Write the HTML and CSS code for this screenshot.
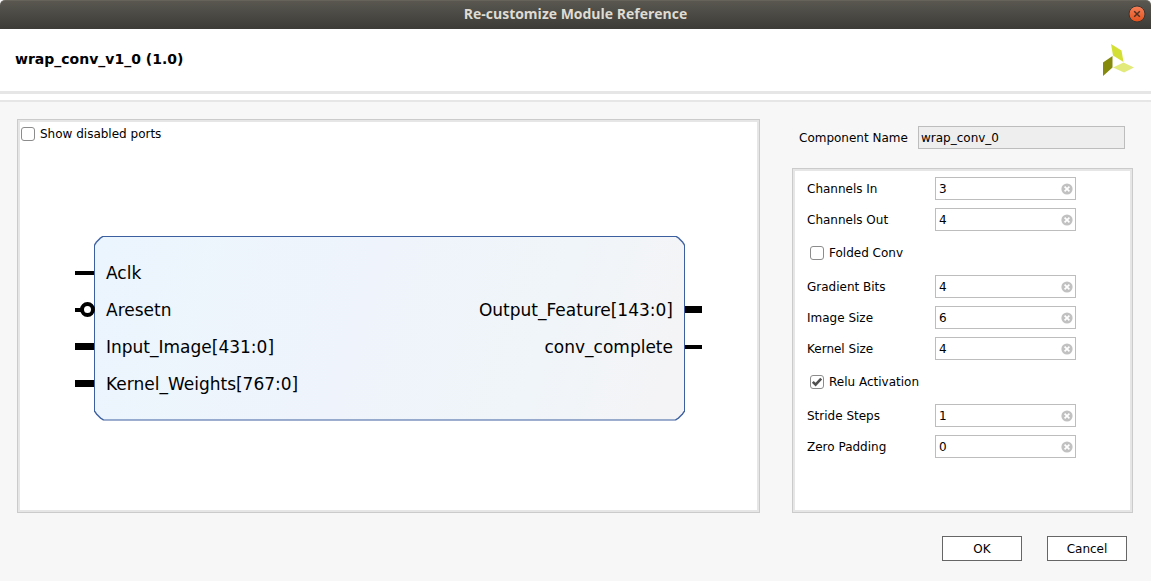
FILE: index.html
```
<!DOCTYPE html>
<html lang="en">
<head>
<meta charset="utf-8">
<title>Re-customize Module Reference</title>
<link rel="stylesheet" href="styles.css">
</head>
<body>
<svg class="defs" width="0" height="0" aria-hidden="true">
  <symbol id="clear" viewBox="0 0 12 12">
    <circle cx="6" cy="6" r="5.6" fill="#c1c1c1"/>
    <path d="M3.6 3.6 8.4 8.4M8.4 3.6 3.6 8.4" stroke="#fff" stroke-width="1.7"/>
  </symbol>
</svg>
<div class="titlebar">
  <h1 class="titlebar-text">Re-customize Module Reference</h1>
  <button class="close" type="button" aria-label="Close">
    <svg width="18" height="18" viewBox="0 0 18 18">
      <defs><linearGradient id="orange" x1="0" y1="0" x2="0" y2="1"><stop offset="0" stop-color="#f58059"/><stop offset="1" stop-color="#e2511c"/></linearGradient></defs>
      <circle cx="9" cy="9" r="8" fill="url(#orange)" stroke="#373632" stroke-width="1"/>
      <path d="M6.2 6.2 11.8 11.8M11.8 6.2 6.2 11.8" stroke="#4c3022" stroke-width="1.5"/>
    </svg>
  </button>
</div>
<header class="header">
  <h2 class="module">wrap_conv_v1_0 (1.0)</h2>
  <svg class="logo" width="32" height="32" viewBox="0 0 32 32" aria-hidden="true">
    <path d="M8 0 18.500 6.500 20.500 18 10 11.500Z" fill="#d4df35"/>
    <path d="M0 18.500 9.500 12V23.500L0 32Z" fill="#858a0c"/>
    <path d="M10 23.500 20.500 18.500 31 23.500 21 28.500Z" fill="#e2ea7c"/>
  </svg>
</header>
<form class="dialog">
  <main class="content">
    <section class="panel preview">
      <label class="check"><input type="checkbox">Show disabled ports</label>
      <div class="diagram">
        <ul class="pins pins-in" aria-hidden="true">
          <li class="pin"></li>
          <li class="pin inverted"></li>
          <li class="pin bus"></li>
          <li class="pin bus"></li>
        </ul>
        <div class="block">
          <ul class="ports">
            <li>Aclk</li>
            <li>Aresetn</li>
            <li>Input_Image[431:0]</li>
            <li>Kernel_Weights[767:0]</li>
          </ul>
          <ul class="ports ports-out">
            <li>Output_Feature[143:0]</li>
            <li>conv_complete</li>
          </ul>
        </div>
        <ul class="pins pins-out" aria-hidden="true">
          <li class="pin bus"></li>
          <li class="pin"></li>
        </ul>
      </div>
    </section>
    <section class="settings">
      <div class="name-row">
        <label for="component">Component Name</label>
        <input class="name" id="component" type="text" value="wrap_conv_0" readonly>
      </div>
      <div class="panel params">
        <div class="row"><label for="cin">Channels In</label><div class="field"><input id="cin" type="text" value="3"><button type="button" class="clear" aria-label="Clear"><svg width="12" height="12"><use href="#clear"/></svg></button></div></div>
        <div class="row"><label for="cout">Channels Out</label><div class="field"><input id="cout" type="text" value="4"><button type="button" class="clear" aria-label="Clear"><svg width="12" height="12"><use href="#clear"/></svg></button></div></div>
        <label class="check option"><input type="checkbox">Folded Conv</label>
        <div class="row"><label for="grad">Gradient Bits</label><div class="field"><input id="grad" type="text" value="4"><button type="button" class="clear" aria-label="Clear"><svg width="12" height="12"><use href="#clear"/></svg></button></div></div>
        <div class="row"><label for="img">Image Size</label><div class="field"><input id="img" type="text" value="6"><button type="button" class="clear" aria-label="Clear"><svg width="12" height="12"><use href="#clear"/></svg></button></div></div>
        <div class="row"><label for="kern">Kernel Size</label><div class="field"><input id="kern" type="text" value="4"><button type="button" class="clear" aria-label="Clear"><svg width="12" height="12"><use href="#clear"/></svg></button></div></div>
        <label class="check option"><input type="checkbox" checked>Relu Activation</label>
        <div class="row"><label for="stride">Stride Steps</label><div class="field"><input id="stride" type="text" value="1"><button type="button" class="clear" aria-label="Clear"><svg width="12" height="12"><use href="#clear"/></svg></button></div></div>
        <div class="row"><label for="pad">Zero Padding</label><div class="field"><input id="pad" type="text" value="0"><button type="button" class="clear" aria-label="Clear"><svg width="12" height="12"><use href="#clear"/></svg></button></div></div>
      </div>
    </section>
  </main>
  <footer class="actions">
    <button class="action" type="submit">OK</button>
    <button class="action" type="button">Cancel</button>
  </footer>
</form>
</body>
</html>
```
FILE: styles.css
```
*, *::before, *::after {
  box-sizing: border-box;
}

body {
  margin: 0;
  min-height: 100vh;
  display: flex;
  flex-direction: column;
  background: #f7f7f7;
  color: #000;
  font: 12px/16px "DejaVu Sans", sans-serif;
}

h1, h2, ul {
  margin: 0;
  padding: 0;
  list-style: none;
}

input, button {
  margin: 0;
  font: inherit;
  color: inherit;
}

.defs {
  position: absolute;
}

/* Window title bar */
.titlebar {
  display: grid;
  grid-template-columns: 1fr auto 1fr;
  align-items: center;
  height: 29px;
  padding: 0 5px 2px;
  border-top: 1px solid #66645a;
  border-radius: 5px 5px 0 0;
  background: linear-gradient(#595750, #3c3b37);
}

.titlebar-text {
  grid-column: 2;
  color: #dfdbd2;
  font: bold 14px/20px "Open Sans", "Noto Sans", sans-serif;
}

.close {
  justify-self: end;
  display: flex;
  padding: 0;
  border: 0;
  background: none;
}

/* Module header */
.header {
  display: flex;
  align-items: center;
  justify-content: space-between;
  height: 65px;
  padding: 0 16px 0 15px;
  border-bottom: 3px solid #e6e6e6;
  background: #fff;
}

.module {
  padding-bottom: 2px;
  font: bold 14px/16px "DejaVu Sans", sans-serif;
}

.dialog {
  flex: 1;
  display: flex;
  flex-direction: column;
  border-top: 6px solid #fff;
}

.content {
  flex: 1;
  display: flex;
  gap: 32px;
  padding: 17px 18px 0 17px;
  border-top: 2px solid #e6e6e6;
}

.panel {
  border: 1px solid #cbcbcb;
  background: #fff;
  box-shadow: inset 0 0 0 2px #e6e6e6;
}

/* Check boxes */
.check {
  display: flex;
  align-items: center;
  gap: 5px;
}

.check input {
  appearance: none;
  width: 14px;
  height: 14px;
  border: 1px solid #8c8c8c;
  border-radius: 3px;
  background: #fff;
}

.check input:checked {
  background: #fff url("data:image/svg+xml,%3Csvg xmlns='http://www.w3.org/2000/svg' viewBox='0 0 12 12'%3E%3Cpath d='M1.800 5.800 4.600 8.600 10.200 2.600' fill='none' stroke='%23505050' stroke-width='2.600'/%3E%3C/svg%3E");
}

/* Block diagram */
.preview {
  flex: 1;
  display: flex;
  flex-direction: column;
  padding: 6px 3px;
}

.diagram {
  flex: 1;
  display: flex;
  align-items: center;
  padding: 8px 54px 0 54px;
}

.pins, .ports {
  display: grid;
  grid-template-rows: repeat(4, 37px);
  align-items: center;
}

.pins-in {
  width: 19px;
}

.pins-out {
  width: 17px;
}

.pins-out, .ports-out {
  padding-top: 37px;
  grid-template-rows: repeat(3, 37px);
}

.pin {
  height: 4px;
  background: #000;
}

.bus {
  height: 7px;
}

.inverted {
  display: flex;
  align-items: center;
  justify-content: flex-end;
  position: relative;
  z-index: 1;
}

.inverted::after {
  content: "";
  width: 15px;
  height: 15px;
  margin-right: -1px;
  flex: none;
  border: 4px solid #000;
  border-radius: 50%;
  background: #fff;
}

.block {
  flex: 1;
  display: flex;
  justify-content: space-between;
  padding: 19px 12px 18px;
  position: relative;
  isolation: isolate;
  font-size: 17px;
  line-height: 20px;
}

.ports-out {
  text-align: right;
}

.block::before, .block::after {
  --cut: polygon(0 9px, 2px 6px, 6px 2px, 9px 0, calc(100% - 9px) 0, calc(100% - 6px) 2px, calc(100% - 2px) 6px, 100% 9px, 100% calc(100% - 9px), calc(100% - 2px) calc(100% - 6px), calc(100% - 6px) calc(100% - 2px), calc(100% - 9px) 100%, 9px 100%, 6px calc(100% - 2px), 2px calc(100% - 6px), 0 calc(100% - 9px));
  content: "";
  position: absolute;
  z-index: -1;
  inset: 0;
  background: #3c5fa0;
  clip-path: var(--cut);
}

.block::after {
  inset: 1px;
  background: linear-gradient(108deg, #ebf5fd, #eff4fc 45%, #f0f5f9 75%, #f4f4f6 95%);
}

/* Settings column */
.settings {
  width: 31%;
  max-width: 341px;
  min-width: 300px;
  flex: 0 0 auto;
  display: flex;
  flex-direction: column;
  gap: 19px;
}

.name-row {
  display: grid;
  grid-template-columns: 112px 1fr;
  align-items: center;
  gap: 7px;
  padding: 7px 8px 0 7px;
}

.name {
  min-width: 0;
  height: 23px;
  padding: 0 2px;
  border: 1px solid #bdbdbd;
  border-radius: 0;
  background: #eee;
}

.params {
  flex: 1;
  display: flex;
  flex-direction: column;
  gap: 8px;
  padding: 8px 14px;
}

.row {
  display: grid;
  grid-template-columns: 128px 141px;
  align-items: center;
}

.field {
  display: flex;
  align-items: center;
  height: 23px;
  padding: 0 2px 0 3px;
  border: 1px solid #bdbdbd;
}

.field input {
  flex: 1;
  min-width: 0;
  height: 21px;
  padding: 0;
  border: 0;
  outline: 0;
  background: none;
}

.clear {
  display: flex;
  padding: 0;
  border: 0;
  background: none;
}

.option {
  height: 28px;
  padding-left: 3px;
}

/* Dialog buttons */
.actions {
  display: flex;
  justify-content: flex-end;
  gap: 25px;
  padding: 23px 24px 20px;
}

.action {
  width: 80px;
  height: 25px;
  padding: 0;
  border: 1px solid #666;
  background: #fff;
}
```
